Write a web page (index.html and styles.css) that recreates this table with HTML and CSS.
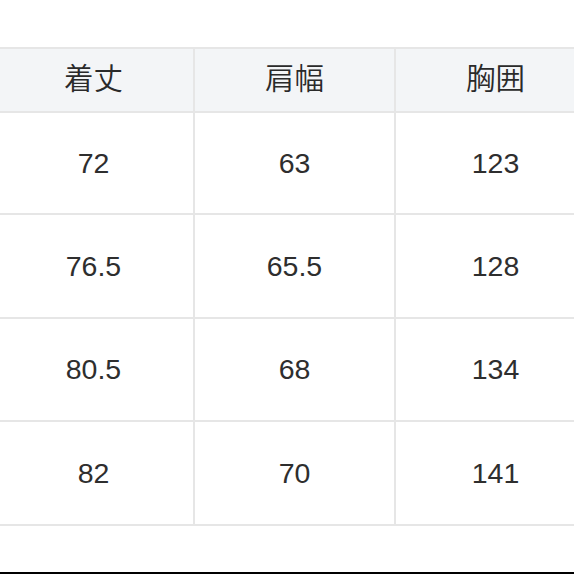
FILE: index.html
```html
<!DOCTYPE html>
<html lang="ja">
<head>
<meta charset="utf-8">
<title>サイズ表</title>
<link rel="stylesheet" href="styles.css">
</head>
<body>
<div class="page">
  <table class="size-table">
    <colgroup><col class="c"><col class="c"><col class="c"></colgroup>
    <thead>
      <tr class="head"><th>着丈</th><th>肩幅</th><th>胸囲</th></tr>
    </thead>
    <tbody>
      <tr class="r1"><td>72</td><td>63</td><td>123</td></tr>
      <tr class="r2"><td>76.5</td><td>65.5</td><td>128</td></tr>
      <tr class="r3"><td>80.5</td><td>68</td><td>134</td></tr>
      <tr class="r4"><td>82</td><td>70</td><td>141</td></tr>
    </tbody>
  </table>
  <div class="spacer"></div>
  <div class="bottom-bar"></div>
</div>
</body>
</html>
```

FILE: styles.css
```css
html, body {
  margin: 0;
  padding: 0;
  background: #ffffff;
  overflow: hidden;
}
.page {
  width: 574px;
  height: 574px;
  display: flex;
  flex-direction: column;
  overflow: hidden;
}
.size-table {
  flex: none;
  margin-top: 47px;
  margin-left: -8px;
  width: 605px;
  table-layout: fixed;
  border-collapse: collapse;
  border: 2px solid #e6e6e6;
  font-family: "Liberation Sans", "Noto Sans CJK JP", sans-serif;
  font-size: 28.5px;
  color: #2e2e2e;
}
.c { width: 201px; }
.size-table th,
.size-table td {
  border: 2px solid #e6e6e6;
  text-align: center;
  vertical-align: middle;
  padding: 0;
  font-weight: normal;
}
.size-table th {
  background: #f3f5f7;
  font-family: "Noto Sans CJK JP", sans-serif;
  font-size: 29.5px;
  font-weight: 350;
  color: #2a2a2a;
  padding-bottom: 8px;
}
.head { height: 64px; }
.r1 { height: 102px; }
.r2 { height: 104px; }
.r3 { height: 103px; }
.r4 { height: 104px; }
.spacer { flex: 1; }
.bottom-bar {
  flex: none;
  height: 2px;
  background: #000000;
}
```
